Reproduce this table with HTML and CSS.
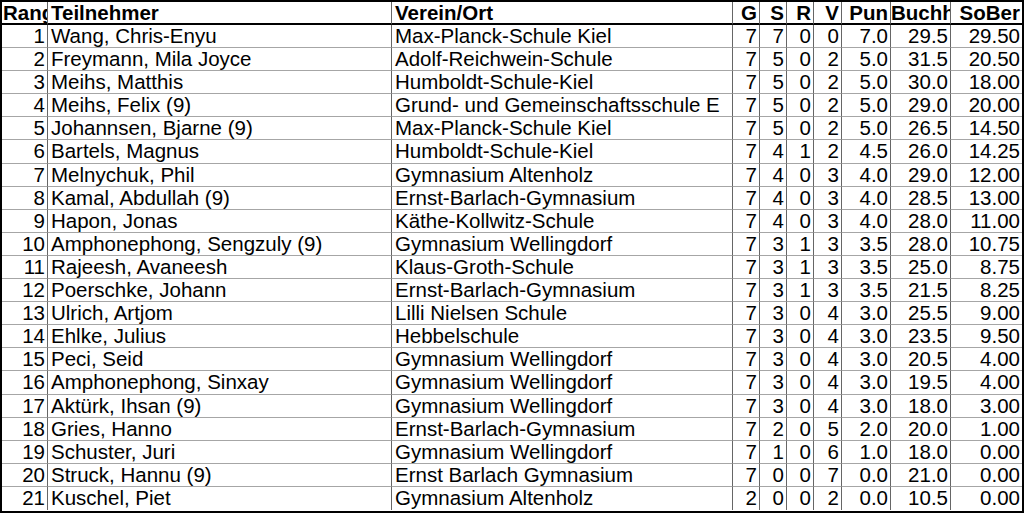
FILE: index.html
```html
<!DOCTYPE html>
<html lang="de">
<head>
<meta charset="utf-8">
<title>Tabelle</title>
<link rel="stylesheet" href="styles.css">
</head>
<body>
<div class="board">
  <div class="cell head first">Rang</div>
  <div class="cell head txt">Teilnehmer</div>
  <div class="cell head txt">Verein/Ort</div>
  <div class="cell head num">G</div>
  <div class="cell head num">S</div>
  <div class="cell head num">R</div>
  <div class="cell head num">V</div>
  <div class="cell head num">Pun</div>
  <div class="cell head num">Buchh</div>
  <div class="cell head num last">SoBer</div>

  <div class="cell num">1</div><div class="cell txt">Wang, Chris-Enyu</div><div class="cell txt">Max-Planck-Schule Kiel</div><div class="cell num">7</div><div class="cell num">7</div><div class="cell num">0</div><div class="cell num">0</div><div class="cell num">7.0</div><div class="cell num">29.5</div><div class="cell num last">29.50</div>
  <div class="cell num">2</div><div class="cell txt">Freymann, Mila Joyce</div><div class="cell txt">Adolf-Reichwein-Schule</div><div class="cell num">7</div><div class="cell num">5</div><div class="cell num">0</div><div class="cell num">2</div><div class="cell num">5.0</div><div class="cell num">31.5</div><div class="cell num last">20.50</div>
  <div class="cell num">3</div><div class="cell txt">Meihs, Matthis</div><div class="cell txt">Humboldt-Schule-Kiel</div><div class="cell num">7</div><div class="cell num">5</div><div class="cell num">0</div><div class="cell num">2</div><div class="cell num">5.0</div><div class="cell num">30.0</div><div class="cell num last">18.00</div>
  <div class="cell num">4</div><div class="cell txt">Meihs, Felix (9)</div><div class="cell txt">Grund- und Gemeinschaftsschule E</div><div class="cell num">7</div><div class="cell num">5</div><div class="cell num">0</div><div class="cell num">2</div><div class="cell num">5.0</div><div class="cell num">29.0</div><div class="cell num last">20.00</div>
  <div class="cell num">5</div><div class="cell txt">Johannsen, Bjarne (9)</div><div class="cell txt">Max-Planck-Schule Kiel</div><div class="cell num">7</div><div class="cell num">5</div><div class="cell num">0</div><div class="cell num">2</div><div class="cell num">5.0</div><div class="cell num">26.5</div><div class="cell num last">14.50</div>
  <div class="cell num">6</div><div class="cell txt">Bartels, Magnus</div><div class="cell txt">Humboldt-Schule-Kiel</div><div class="cell num">7</div><div class="cell num">4</div><div class="cell num">1</div><div class="cell num">2</div><div class="cell num">4.5</div><div class="cell num">26.0</div><div class="cell num last">14.25</div>
  <div class="cell num">7</div><div class="cell txt">Melnychuk, Phil</div><div class="cell txt">Gymnasium Altenholz</div><div class="cell num">7</div><div class="cell num">4</div><div class="cell num">0</div><div class="cell num">3</div><div class="cell num">4.0</div><div class="cell num">29.0</div><div class="cell num last">12.00</div>
  <div class="cell num">8</div><div class="cell txt">Kamal, Abdullah (9)</div><div class="cell txt">Ernst-Barlach-Gymnasium</div><div class="cell num">7</div><div class="cell num">4</div><div class="cell num">0</div><div class="cell num">3</div><div class="cell num">4.0</div><div class="cell num">28.5</div><div class="cell num last">13.00</div>
  <div class="cell num">9</div><div class="cell txt">Hapon, Jonas</div><div class="cell txt">Käthe-Kollwitz-Schule</div><div class="cell num">7</div><div class="cell num">4</div><div class="cell num">0</div><div class="cell num">3</div><div class="cell num">4.0</div><div class="cell num">28.0</div><div class="cell num last">11.00</div>
  <div class="cell num">10</div><div class="cell txt">Amphonephong, Sengzuly (9)</div><div class="cell txt">Gymnasium Wellingdorf</div><div class="cell num">7</div><div class="cell num">3</div><div class="cell num">1</div><div class="cell num">3</div><div class="cell num">3.5</div><div class="cell num">28.0</div><div class="cell num last">10.75</div>
  <div class="cell num">11</div><div class="cell txt">Rajeesh, Avaneesh</div><div class="cell txt">Klaus-Groth-Schule</div><div class="cell num">7</div><div class="cell num">3</div><div class="cell num">1</div><div class="cell num">3</div><div class="cell num">3.5</div><div class="cell num">25.0</div><div class="cell num last">8.75</div>
  <div class="cell num">12</div><div class="cell txt">Poerschke, Johann</div><div class="cell txt">Ernst-Barlach-Gymnasium</div><div class="cell num">7</div><div class="cell num">3</div><div class="cell num">1</div><div class="cell num">3</div><div class="cell num">3.5</div><div class="cell num">21.5</div><div class="cell num last">8.25</div>
  <div class="cell num">13</div><div class="cell txt">Ulrich, Artjom</div><div class="cell txt">Lilli Nielsen Schule</div><div class="cell num">7</div><div class="cell num">3</div><div class="cell num">0</div><div class="cell num">4</div><div class="cell num">3.0</div><div class="cell num">25.5</div><div class="cell num last">9.00</div>
  <div class="cell num">14</div><div class="cell txt">Ehlke, Julius</div><div class="cell txt">Hebbelschule</div><div class="cell num">7</div><div class="cell num">3</div><div class="cell num">0</div><div class="cell num">4</div><div class="cell num">3.0</div><div class="cell num">23.5</div><div class="cell num last">9.50</div>
  <div class="cell num">15</div><div class="cell txt">Peci, Seid</div><div class="cell txt">Gymnasium Wellingdorf</div><div class="cell num">7</div><div class="cell num">3</div><div class="cell num">0</div><div class="cell num">4</div><div class="cell num">3.0</div><div class="cell num">20.5</div><div class="cell num last">4.00</div>
  <div class="cell num">16</div><div class="cell txt">Amphonephong, Sinxay</div><div class="cell txt">Gymnasium Wellingdorf</div><div class="cell num">7</div><div class="cell num">3</div><div class="cell num">0</div><div class="cell num">4</div><div class="cell num">3.0</div><div class="cell num">19.5</div><div class="cell num last">4.00</div>
  <div class="cell num">17</div><div class="cell txt">Aktürk, Ihsan (9)</div><div class="cell txt">Gymnasium Wellingdorf</div><div class="cell num">7</div><div class="cell num">3</div><div class="cell num">0</div><div class="cell num">4</div><div class="cell num">3.0</div><div class="cell num">18.0</div><div class="cell num last">3.00</div>
  <div class="cell num">18</div><div class="cell txt">Gries, Hanno</div><div class="cell txt">Ernst-Barlach-Gymnasium</div><div class="cell num">7</div><div class="cell num">2</div><div class="cell num">0</div><div class="cell num">5</div><div class="cell num">2.0</div><div class="cell num">20.0</div><div class="cell num last">1.00</div>
  <div class="cell num">19</div><div class="cell txt">Schuster, Juri</div><div class="cell txt">Gymnasium Wellingdorf</div><div class="cell num">7</div><div class="cell num">1</div><div class="cell num">0</div><div class="cell num">6</div><div class="cell num">1.0</div><div class="cell num">18.0</div><div class="cell num last">0.00</div>
  <div class="cell num">20</div><div class="cell txt">Struck, Hannu (9)</div><div class="cell txt">Ernst Barlach Gymnasium</div><div class="cell num">7</div><div class="cell num">0</div><div class="cell num">0</div><div class="cell num">7</div><div class="cell num">0.0</div><div class="cell num">21.0</div><div class="cell num last">0.00</div>
  <div class="cell num bottom">21</div><div class="cell txt bottom">Kuschel, Piet</div><div class="cell txt bottom">Gymnasium Altenholz</div><div class="cell num bottom">2</div><div class="cell num bottom">0</div><div class="cell num bottom">0</div><div class="cell num bottom">2</div><div class="cell num bottom">0.0</div><div class="cell num bottom">10.5</div><div class="cell num last bottom">0.00</div>
</div>
</body>
</html>
```
FILE: styles.css
```css
html, body { margin: 0; padding: 0; background: #fff; }
body { font-family: "Liberation Sans", Arial, sans-serif; font-size: 20.5px; color: #000; }
.board {
  width: 1024px; height: 513px; box-sizing: border-box; overflow: hidden;
  border: 2px solid #000;
  display: grid;
  grid-template-columns: 46px 344px 341px 27px 27px 27px 28px 49px 60px 71px;
  grid-template-rows: 23px repeat(21, 23.1px);
}
.cell {
  box-sizing: border-box; overflow: hidden; white-space: nowrap;
  border-right: 1px solid #666; border-bottom: 1px solid #a6a6a6;
  line-height: 21.5px; height: 100%;
}
.cell.last { border-right: 0; }
.cell.head { font-weight: bold; border-bottom: 2px solid #000; line-height: 21px; }
.cell.bottom { border-bottom: 0; }
.txt { padding-left: 3px; text-align: left; }
.num { padding-right: 2px; text-align: right; }
.head.first { padding-left: 1px; text-align: left; }
```
